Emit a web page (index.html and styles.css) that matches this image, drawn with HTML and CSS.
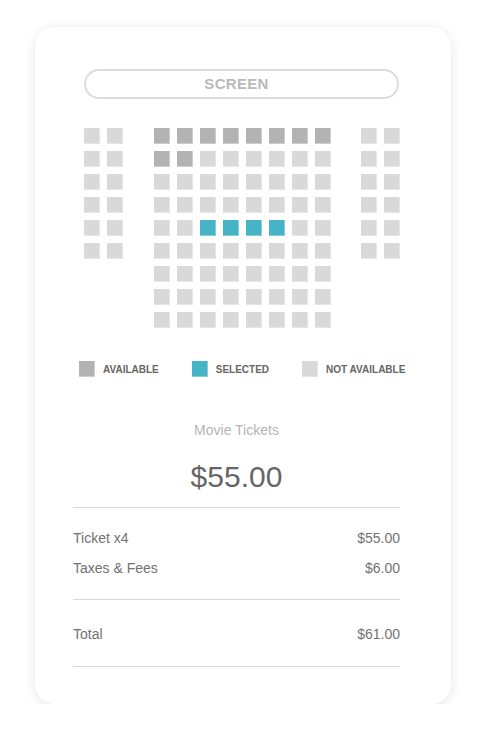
FILE: index.html
```html
<!DOCTYPE html>
<html lang="en">
<head>
  <title>Seat Selection</title>
  <link rel="stylesheet" href="styles.css">
</head>
<body>
  <div class="card">
    <div class="screen">SCREEN</div>

    <div class="seat-map">
      <div class="block side" id="block-left"></div>
      <div class="block center" id="block-center"></div>
      <div class="block side" id="block-right"></div>
    </div>

    <div class="legend">
      <div class="legend-item"><span class="seat available"></span>AVAILABLE</div>
      <div class="legend-item"><span class="seat selected"></span>SELECTED</div>
      <div class="legend-item"><span class="seat taken"></span>NOT AVAILABLE</div>
    </div>

    <div class="summary">
      <div class="summary-title">Movie Tickets</div>
      <div class="summary-price">$55.00</div>
      <hr class="divider">
      <div class="rows">
        <div class="row"><span>Ticket x4</span><span>$55.00</span></div>
        <div class="row"><span>Taxes &amp; Fees</span><span>$6.00</span></div>
      </div>
      <hr class="divider mid">
      <div class="row total"><span>Total</span><span>$61.00</span></div>
      <hr class="divider last">
    </div>
  </div>

  <script>
    // a = available, s = selected, x = not available
    const center = [
      'aaaaaaaa',
      'aaxxxxxx',
      'xxxxxxxx',
      'xxxxxxxx',
      'xxssssxx',
      'xxxxxxxx',
      'xxxxxxxx',
      'xxxxxxxx',
      'xxxxxxxx'
    ];
    const classes = { a: 'available', s: 'selected', x: 'taken' };

    function fill(id, rows) {
      const block = document.getElementById(id);
      rows.forEach(row => {
        for (const c of row) {
          const seat = document.createElement('span');
          seat.className = 'seat ' + classes[c];
          block.appendChild(seat);
        }
      });
    }

    const side = ['xx', 'xx', 'xx', 'xx', 'xx', 'xx'];
    fill('block-left', side);
    fill('block-center', center);
    fill('block-right', side);
  </script>
</body>
</html>
```

FILE: styles.css
```css
body {
  margin: 0;
  background: #fff;
  font-family: "Liberation Sans", Arial, sans-serif;
}
.card {
  width: 416px;
  box-sizing: border-box;
  margin: 27px 0 0 35px;
  padding: 42px 51px 37px 38px;
  background: #fff;
  border-radius: 20px;
  box-shadow: 0 2px 12px rgba(0, 0, 0, 0.1);
}
.screen {
  width: 315px;
  height: 30px;
  box-sizing: border-box;
  margin-left: 11px;
  padding-right: 10px;
  border: 2px solid #dcdcdc;
  border-radius: 15px;
  color: #b9b9b9;
  font-size: 15px;
  font-weight: bold;
  letter-spacing: 0.3px;
  line-height: 26px;
  text-align: center;
}
.seat-map {
  display: flex;
  justify-content: space-between;
  align-items: flex-start;
  width: 316px;
  margin: 29px 0 0 11px;
}
.block {
  display: grid;
  gap: 7px;
}
.block.side {
  grid-template-columns: repeat(2, 16px);
}
.block.center {
  grid-template-columns: repeat(8, 16px);
}
.seat {
  display: block;
  width: 16px;
  height: 16px;
  box-shadow: inset -1px -1px 0 rgba(255, 255, 255, 0.35);
}
.seat.available {
  background: #b3b3b3;
}
.seat.selected {
  background: #47b3c6;
}
.seat.taken {
  background: #d9d9d9;
}
.legend {
  display: flex;
  gap: 33px;
  margin: 33px 0 0 6px;
  white-space: nowrap;
}
.legend-item {
  display: flex;
  align-items: center;
  color: #666;
  font-size: 10px;
  font-weight: bold;
}
.legend-item .seat {
  margin-right: 8px;
}
.summary-title {
  margin-top: 45px;
  color: #b5b5b5;
  font-size: 14px;
  line-height: 16px;
  text-align: center;
}
.summary-price {
  margin-top: 21px;
  color: #666;
  font-size: 30px;
  line-height: 36px;
  text-align: center;
}
.divider {
  height: 1px;
  margin: 12px 0 0;
  border: none;
  background: #d6d6d6;
}
.rows {
  padding-top: 15px;
}
.row {
  display: flex;
  justify-content: space-between;
  color: #727272;
  font-size: 14px;
  line-height: 30px;
}
.divider.mid {
  margin-top: 16px;
}
.row.total {
  margin-top: 19px;
}
.divider.last {
  margin-top: 17px;
}
```
